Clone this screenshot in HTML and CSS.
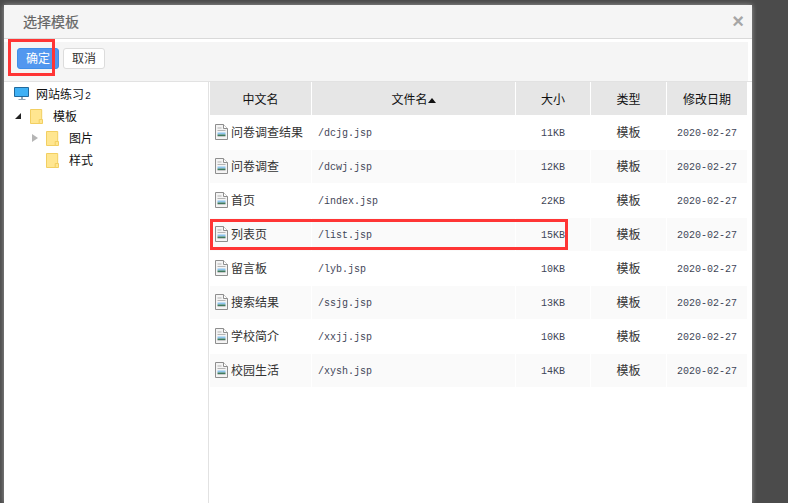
FILE: index.html
```html
<!DOCTYPE html>
<html lang="zh-CN">
<head>
<meta charset="utf-8">
<title>选择模板</title>
<link rel="stylesheet" href="styles.css">
</head>
<body>
<svg class="sprites" width="0" height="0" aria-hidden="true">
  <symbol id="folder" viewBox="0 0 13 15">
    <path d="M.5.5h11.2v14H.5z" fill="#ffe690" stroke="#f2cf62"/>
    <path d="M9.2 10.5h3.3v4H9.200z" fill="#ffe690" stroke="#f2cf62"/>
  </symbol>
  <symbol id="file" viewBox="0 0 13 16">
    <path d="M.5.500h8l4 4v11H.5z" fill="#f4f4f4" stroke="#8e8e8e"/>
    <path d="M8.500.500v4h4" fill="#fff" stroke="#8e8e8e"/>
    <path d="M2.500 4h4M2.500 6.500h8" stroke="#b5b5b5" fill="none"/>
    <path d="M2.500 8.500h8v2h-8z" fill="#8cc4ee"/>
    <path d="M2.500 10.500h8v1.500h-8z" fill="#3f7a5c"/>
    <path d="M2.500 12h8v1h-8z" fill="#c9c9c9"/>
  </symbol>
</svg>
<div class="dialog">
  <header class="title-bar">
    <h1 class="title">选择模板</h1>
    <span class="close">×</span>
  </header>
  <div class="toolbar">
    <button class="btn btn-primary" type="button">确定</button>
    <button class="btn" type="button">取消</button>
  </div>
  <div class="body">
    <nav class="tree">
      <div class="node">
        <span class="arrow"></span>
        <svg class="monitor" width="16" height="14" viewBox="0 0 16 14"><path d="M.5.500h14v9H.5z" fill="#3fb1f5" stroke="#20699c"/><path d="M7 10h2v2H7zM4.500 12h7v1h-7z" fill="#8fa5b5"/></svg>
        <span class="label label-root">网站练习<span class="count">2</span></span>
      </div>
      <div class="node">
        <span class="arrow arrow-open"></span>
        <svg class="folder" width="13" height="15"><use href="#folder"/></svg>
        <span class="label label-folder">模板</span>
      </div>
      <div class="node node-child">
        <span class="arrow arrow-closed"></span>
        <svg class="folder" width="13" height="15"><use href="#folder"/></svg>
        <span class="label">图片</span>
      </div>
      <div class="node node-child">
        <span class="arrow"></span>
        <svg class="folder" width="13" height="15"><use href="#folder"/></svg>
        <span class="label">样式</span>
      </div>
    </nav>
    <table class="files">
      <colgroup>
        <col class="c1"><col class="c2"><col class="c3"><col class="c4"><col class="c5">
      </colgroup>
      <thead>
        <tr><th>中文名</th><th>文件名<span class="sort"></span></th><th>大小</th><th>类型</th><th>修改日期</th></tr>
      </thead>
      <tbody>
        <tr><td class="name"><svg class="file" width="13" height="16"><use href="#file"/></svg>问卷调查结果</td><td class="path">/dcjg.jsp</td><td class="mono">11KB</td><td>模板</td><td class="mono">2020-02-27</td></tr>
        <tr><td class="name"><svg class="file" width="13" height="16"><use href="#file"/></svg>问卷调查</td><td class="path">/dcwj.jsp</td><td class="mono">12KB</td><td>模板</td><td class="mono">2020-02-27</td></tr>
        <tr><td class="name"><svg class="file" width="13" height="16"><use href="#file"/></svg>首页</td><td class="path">/index.jsp</td><td class="mono">22KB</td><td>模板</td><td class="mono">2020-02-27</td></tr>
        <tr><td class="name"><svg class="file" width="13" height="16"><use href="#file"/></svg>列表页</td><td class="path">/list.jsp</td><td class="mono">15KB</td><td>模板</td><td class="mono">2020-02-27</td></tr>
        <tr><td class="name"><svg class="file" width="13" height="16"><use href="#file"/></svg>留言板</td><td class="path">/lyb.jsp</td><td class="mono">10KB</td><td>模板</td><td class="mono">2020-02-27</td></tr>
        <tr><td class="name"><svg class="file" width="13" height="16"><use href="#file"/></svg>搜索结果</td><td class="path">/ssjg.jsp</td><td class="mono">13KB</td><td>模板</td><td class="mono">2020-02-27</td></tr>
        <tr><td class="name"><svg class="file" width="13" height="16"><use href="#file"/></svg>学校简介</td><td class="path">/xxjj.jsp</td><td class="mono">10KB</td><td>模板</td><td class="mono">2020-02-27</td></tr>
        <tr><td class="name"><svg class="file" width="13" height="16"><use href="#file"/></svg>校园生活</td><td class="path">/xysh.jsp</td><td class="mono">14KB</td><td>模板</td><td class="mono">2020-02-27</td></tr>
      </tbody>
    </table>
  </div>
</div>
<div class="mark mark-btn"></div>
<div class="mark mark-row"></div>
</body>
</html>
```
FILE: styles.css
```css
html, body {
  margin: 0;
  height: 100%;
  overflow: hidden;
}
body {
  background: #4b4b4b;
  font-family: "Noto Sans CJK SC", "Liberation Sans", sans-serif;
  font-size: 12px;
  color: #333;
  position: relative;
}
.sprites { position: absolute; }
.dialog {
  width: 748px;
  height: 498px;
  margin: 5px 0 0 4px;
  background: #fff;
  box-shadow: 0 0 5px rgba(255, 255, 255, .45);
  display: flex;
  flex-direction: column;
}
.title-bar {
  background: #f5f5f5;
  border-bottom: 1px solid #d9d9d9;
  display: flex;
  align-items: center;
  justify-content: space-between;
  padding: 0 8px 2px 19px;
  flex: none;
  height: 31px;
}
.title {
  margin: 0;
  font-size: 14px;
  font-weight: normal;
  color: #666;
  -webkit-text-stroke: .2px #666;
}
.close {
  font: bold 20px/1 "Liberation Sans", sans-serif;
  color: #a6a6a6;
}
.toolbar {
  height: 33px;
  margin: 3px 4px 0 0;
  background: #f5f5f5;
  display: flex;
  align-items: flex-start;
  gap: 4px;
  padding: 6px 0 0 13px;
  flex: none;
}
.btn {
  width: 42px;
  height: 21px;
  padding: 0 0 2px;
  border: 1px solid #dcdcdc;
  border-radius: 3px;
  background: #fff;
  color: #333;
  font: 12px/1 "Noto Sans CJK SC", sans-serif;
}
.btn-primary {
  background: #5297ef;
  border-color: #3f8ee8;
  color: #fff;
}
.body {
  flex: 1;
  display: flex;
  border-top: 1px solid #e2e2e2;
  min-height: 0;
}
.tree {
  width: 204px;
  border-right: 1px solid #e2e2e2;
  padding-top: 1px;
  flex: none;
  color: #111;
}
.node {
  height: 22px;
  display: flex;
  align-items: center;
  padding-left: 10px;
}
.node-child { padding-left: 26px; }
.arrow {
  width: 10px;
  height: 10px;
  flex: none;
  margin-right: 6px;
  position: relative;
}
.node:first-child .arrow { display: none; }
.arrow-open::before {
  content: "";
  position: absolute;
  left: 1px;
  top: 2px;
  border-left: 6px solid transparent;
  border-bottom: 6px solid #222;
}
.arrow-closed::before {
  content: "";
  position: absolute;
  left: 2px;
  top: 1px;
  width: 0;
  border-left: 6px solid #b5b5b5;
  border-top: 4px solid transparent;
  border-bottom: 4px solid transparent;
}
.monitor { flex: none; margin-right: 6px; }
.folder { flex: none; }
.label { margin-left: 10px; padding-bottom: 1px; }
.label-root { margin-left: 0; }
.count {
  font: 10px "Liberation Mono", monospace;
  color: #223;
  margin-left: 1px;
}
.files {
  width: 538px;
  height: 305px;
  margin-left: 1px;
  border-collapse: separate;
  border-spacing: 0;
  table-layout: fixed;
}
.c1 { width: 102px; }
.c2 { width: 204px; }
.c3 { width: 75px; }
.c4 { width: 76px; }
.c5 { width: 81px; }
.files th {
  height: 32px;
  padding: 0 0 1px;
  background: #e6e6e6;
  border-right: 1px solid #fff;
  border-bottom: 1px solid #fff;
  font-weight: normal;
  color: #111;
  text-align: center;
}
.files td {
  height: 31px;
  padding: 0 0 2px;
  border-right: 1px solid #fff;
  border-bottom: 1px solid #fff;
  text-align: center;
  white-space: nowrap;
  color: #333;
}
.files tbody tr:nth-child(even) td { background: #fafafa; }
.sort {
  display: inline-block;
  border-left: 4px solid transparent;
  border-right: 4px solid transparent;
  border-bottom: 5px solid #111;
  margin-bottom: 1px;
}
.files .name { text-align: left; padding-left: 5px; }
.file { vertical-align: -3px; margin-right: 3px; }
.files .path {
  text-align: left;
  padding: 1px 0 0 6px;
  height: 32px;
  font: 10px "Liberation Mono", monospace;
  color: #3f4658;
}
.files .mono {
  padding: 1px 0 0;
  height: 32px;
  font: 10px "Liberation Mono", monospace;
  color: #3f4658;
}
.mark {
  position: absolute;
  border: 3px solid #ff3535;
  box-sizing: border-box;
}
.mark-btn { left: 8px; top: 39px; width: 47px; height: 37px; }
.mark-row { left: 210px; top: 219px; width: 358px; height: 31px; }
```
